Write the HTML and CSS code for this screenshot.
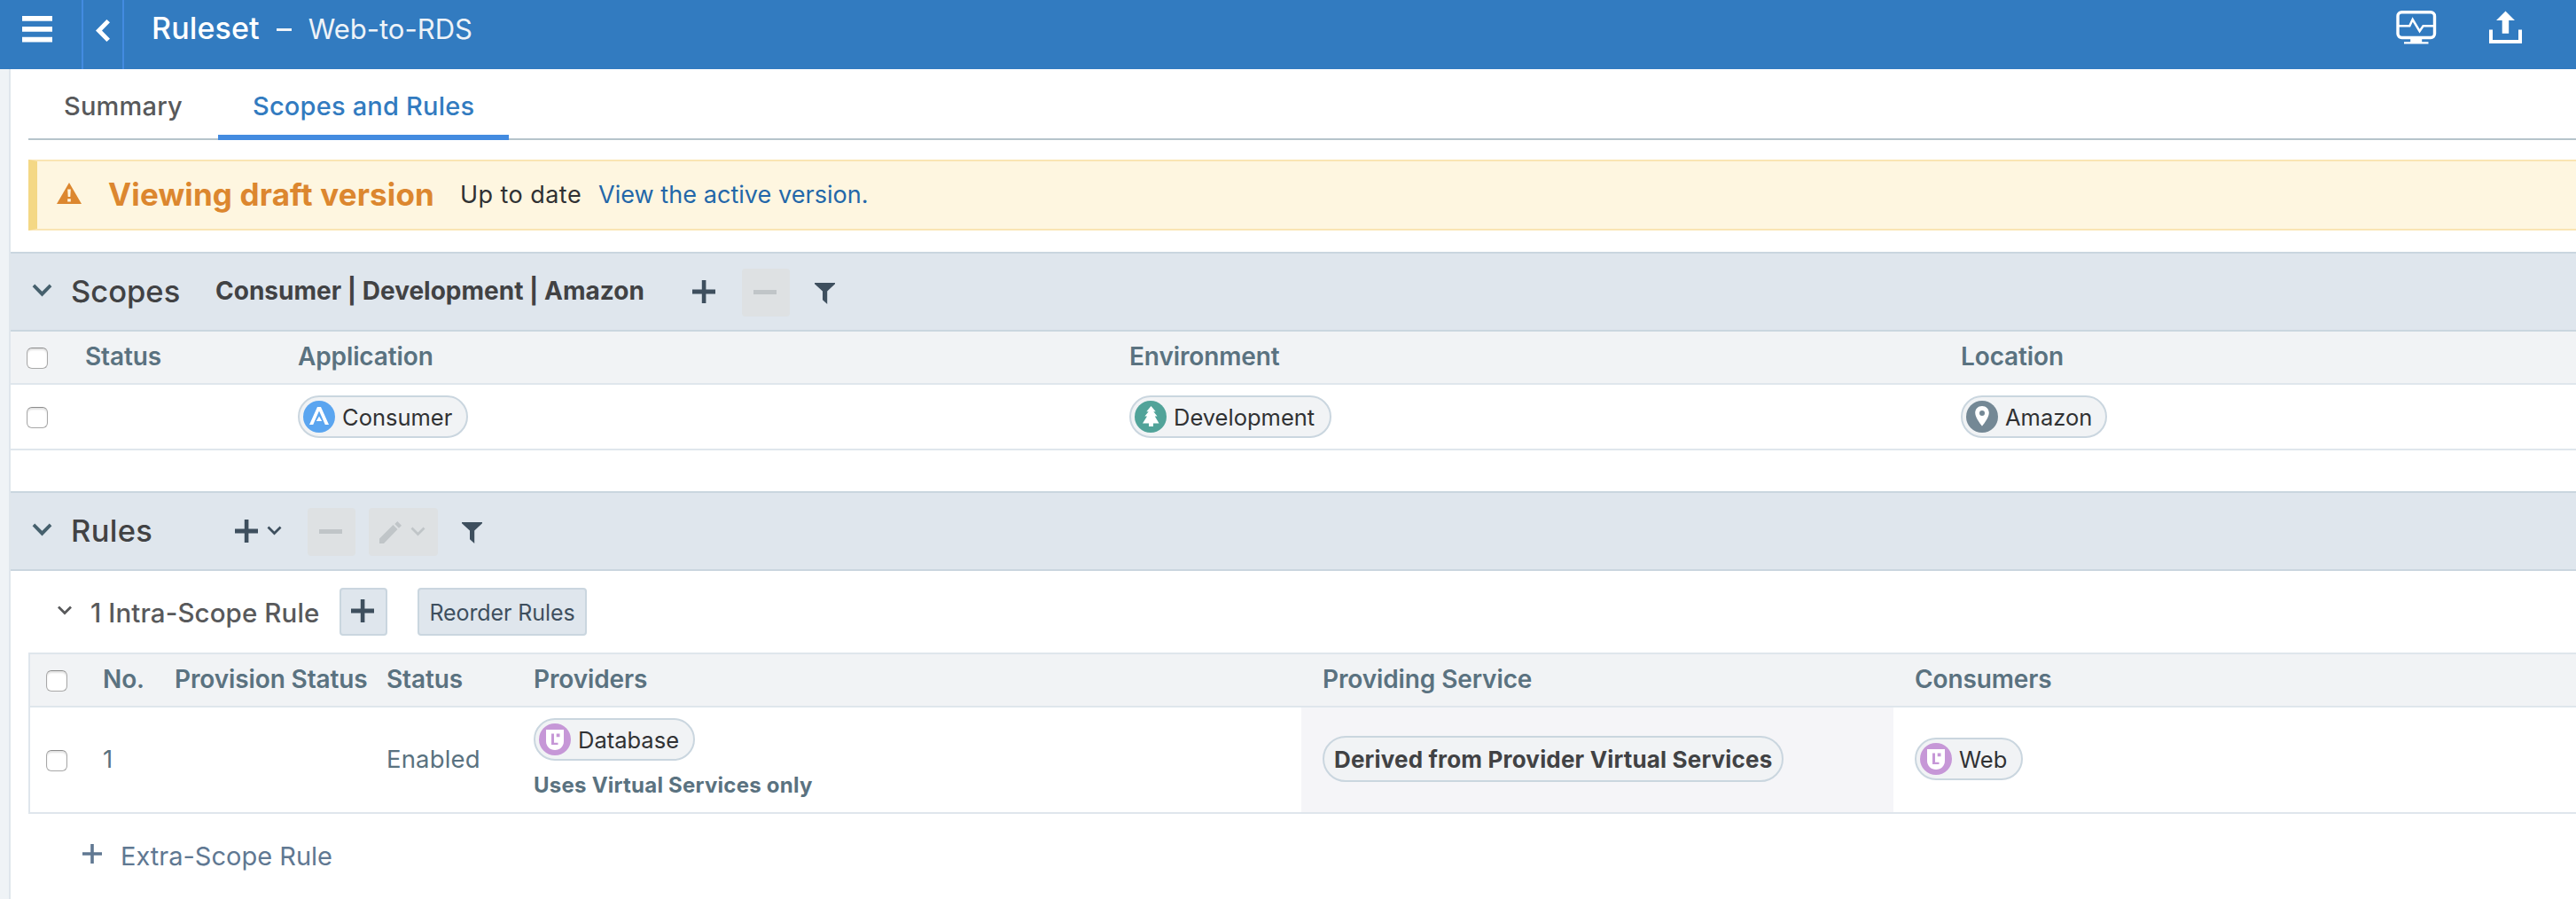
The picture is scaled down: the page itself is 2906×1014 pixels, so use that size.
FILE: index.html
```html
<!DOCTYPE html>
<html lang="en">
<head>
<meta charset="utf-8">
<title>Ruleset – Web-to-RDS</title>
<link rel="stylesheet" href="styles.css">
</head>
<body>
<svg class="defs" width="0" height="0" aria-hidden="true">
  <symbol id="plus" viewBox="0 0 26 26"><path d="M10.8 0h4.6v10.6H26v4.8H15.4V26h-4.6V15.4H0v-4.8h10.8z"/></symbol>
  <symbol id="minus" viewBox="0 0 26 5"><path d="M0 0h26v5H0z"/></symbol>
  <symbol id="filter" viewBox="0 0 23 24"><path d="M0 0h23v1.2L14.2 9.5V24L9 19.2V9.5L0 1.2z"/></symbol>
  <symbol id="chevron" viewBox="0 0 24 16"><path d="M3.2.6 12 9.4 20.8.6 23.600 3.500 12 15.400.4 3.500z"/></symbol>
  <symbol id="label" viewBox="0 0 36 36"><circle class="role-bg" cx="18" cy="18" r="18"/><path fill="#fff" d="M8 7h20v13c0 6-4.500 10-10 10S8 26 8 20z"/><path class="role-bg" d="M14 11.500h3v10.200h4.500V24H14zM19.700 11.500h3.800v3.800h-3.800z"/></symbol>
</svg>

<header class="topbar">
  <button class="menu"><svg width="34" height="30" viewBox="0 0 34 30"><path d="M0 0h34v5.800H0zM0 12h34v5.700H0zM0 23.800h34v5.800H0z"/></svg></button>
  <button class="back"><svg width="16" height="25" viewBox="0 0 16 25"><path d="M12.400 0 16 3.200 7 12.500l9 9.300-3.600 3.200L0 12.500z"/></svg></button>
  <h1 class="title">Ruleset<span class="dash"></span><span class="name">Web-to-RDS</span></h1>
  <div class="actions">
    <svg class="monitor" width="46" height="39" viewBox="0 0 46 39" fill="none" stroke="#fff"><rect x="2" y="1.700" width="41.500" height="28.800" rx="4.500" stroke-width="3.400"/><path d="M2 17.300h13.300L18.700 10l7.900 13.200 4-5.900H44" stroke-width="2.500"/><path d="M16.200 30h13v5.300h7.300v2.200H9v-2.200h7.200z" fill="#fff" stroke="none"/></svg>
    <svg width="37" height="38" viewBox="0 0 37 38" fill="#fff"><path d="M18.500.5 29 11h-6.800v14.800h-7.500V11H8zM0 21.500h4V33h29V21.500h4V37H0z"/></svg>
  </div>
</header>

<main class="page">
  <nav class="tabs"><a class="tab">Summary</a><a class="tab active">Scopes and Rules</a></nav>

  <div class="banner">
    <svg width="28" height="24" viewBox="0 0 28 24"><path fill="#dc872f" d="M14 0 28 24H0z"/><path fill="#fef6e0" d="M12.200 7.500h3.600L15.300 16h-2.600zM12.200 18.200h3.600v3.400h-3.600z"/></svg>
    <strong>Viewing draft version</strong><span class="state">Up to date</span><a>View the active version.</a>
  </div>

  <section>
    <div class="bar">
      <svg class="fold"><use href="#chevron"/></svg>
      <h2 class="scopes-title">Scopes</h2>
      <span class="scope-name">Consumer | Development | Amazon</span>
      <svg class="plus scopes-plus"><use href="#plus"/></svg>
      <span class="btn disabled scopes-minus"><svg class="minus"><use href="#minus"/></svg></span>
      <svg class="filter scopes-filter"><use href="#filter"/></svg>
    </div>
    <div class="scopes-grid head"><i class="check"></i><span>Status</span><span>Application</span><span>Environment</span><span>Location</span></div>
    <div class="scopes-grid row">
      <i class="check"></i><span></span>
      <div><span class="pill"><svg width="36" height="36" viewBox="0 0 36 36"><circle cx="18" cy="18" r="18" fill="#5aa5f0"/><path fill="#fff" d="M16 7h4l9 20h-4.200L18 11.500 11.200 27H7zM18 17.500l3.200 5.500h-6.400z"/></svg><span>Consumer</span></span></div>
      <div><span class="pill development"><svg width="36" height="36" viewBox="0 0 36 36"><circle cx="18" cy="18" r="18" fill="#51a399"/><path fill="#fff" d="m18.500 6 5.300 6.200h-2.500l4.200 5.300h-2.700l4.700 8h-6.500v3.500h-5v-3.500H9l5-8h-2.600l4.300-5.300h-2.400z"/></svg><span>Development</span></span></div>
      <div><span class="pill amazon"><svg width="36" height="36" viewBox="0 0 36 36"><circle cx="18" cy="18" r="18" fill="#748895"/><path fill="#fff" fill-rule="evenodd" d="M18 6c-4.500 0-7.800 3.400-7.800 7.700C10.200 19.500 18 28.500 18 28.500s7.800-9 7.800-14.800C25.800 9.400 22.500 6 18 6zm0 5a3 3 0 1 1 0 6 3 3 0 0 1 0-6z"/></svg><span>Amazon</span></span></div>
    </div>
  </section>

  <section class="rules">
    <div class="bar">
      <svg class="fold"><use href="#chevron"/></svg>
      <h2 class="rules-title">Rules</h2>
      <svg class="plus rules-plus"><use href="#plus"/></svg>
      <svg class="mini"><use href="#chevron"/></svg>
      <span class="btn disabled rules-minus"><svg class="minus"><use href="#minus"/></svg></span>
      <span class="btn disabled edit"><svg width="25" height="25" viewBox="0 0 25 25"><path d="M0 19.500 15.500 4 20.500 9 5 25H0zM17.300 3 20.300 0 25 4.700 22 7.700z"/></svg><svg class="mini"><use href="#chevron"/></svg></span>
      <svg class="filter rules-filter"><use href="#filter"/></svg>
    </div>

    <div class="subbar">
      <svg class="mini"><use href="#chevron"/></svg>
      <h3>1 Intra-Scope Rule</h3>
      <span class="btn outlined add"><svg class="plus"><use href="#plus"/></svg></span>
      <span class="btn outlined reorder">Reorder Rules</span>
    </div>

    <div class="rules-table">
      <div class="rules-grid head"><i class="check"></i><span>No.</span><span>Provision Status</span><span>Status</span><span>Providers</span><span class="service-head">Providing Service</span><span>Consumers</span></div>
      <div class="rules-grid row">
        <i class="check"></i><span class="value">1</span><span></span><span class="value">Enabled</span>
        <div class="providers"><span class="pill"><svg width="36" height="36"><use href="#label"/></svg><span>Database</span></span><p class="note">Uses Virtual Services only</p></div>
        <div class="service"><span class="pill derived">Derived from Provider Virtual Services</span></div>
        <div class="consumers"><span class="pill"><svg width="36" height="36"><use href="#label"/></svg><span>Web</span></span></div>
      </div>
    </div>

    <a class="extra"><svg width="22" height="22" viewBox="0 0 22 22"><path d="M9.200 0h3.600v9.200H22v3.600h-9.200V22H9.200v-9.200H0V9.200h9.200z"/></svg>Extra-Scope Rule</a>
  </section>
</main>
</body>
</html>
```
FILE: styles.css
```css
* { box-sizing: border-box; }
html, body { height: 100%; }
body {
  margin: 0;
  overflow: hidden;
  background: #fff;
  color: #303133;
  font-family: Inter, "Liberation Sans", sans-serif;
  font-size: 26px;
  line-height: 1.2;
  white-space: nowrap;
}
svg { display: block; flex: none; fill: currentColor; }
.defs { position: absolute; }
h1, h2, h3, p { margin: 0; font-weight: 500; }
button { border: 0; padding: 0; background: none; color: #fff; flex: none; }

/* top bar */
.topbar { display: flex; height: 78px; background: #327bc0; color: #fff; }
.menu { width: 94px; padding: 18px 0 0 25px; border-right: 2px solid #438be0; display: flex; align-items: flex-start; }
.back { width: 46px; padding: 22px 0 0 14px; border-right: 2px solid #438be0; display: flex; align-items: flex-start; }
.title { flex: 1; display: flex; align-items: baseline; font-size: 34px; line-height: 64px; letter-spacing: .12px; padding-left: 31px; }
.dash { width: 17px; height: 3px; margin: 0 19px 0 19px; background: #eef3f8; transform: translateY(-9px); }
.name { font-size: 31px; font-weight: 400; letter-spacing: 0; color: #eef3f8; }
.actions { display: flex; gap: 59px; padding: 12px 61px 0 0; }
.actions .monitor { fill: none; }

.page { height: 936px; margin-left: 10px; border-left: 2px solid #dfe6ec; box-shadow: -10px 0 #eff3f6; }

/* tabs */
.tabs { display: flex; height: 80px; margin-left: 20px; background: linear-gradient(#b6c4cb, #b6c4cb) bottom / 100% 2px no-repeat; }
.tab { padding: 0 40px; line-height: 83px; font-size: 29px; font-weight: 500; letter-spacing: .2px; color: #58595b; width: 214px; }
.tab.active { width: 328px; padding-left: 39px; color: #327bc0; border-bottom: 6px solid #438be0; }

/* draft banner */
.banner { display: flex; align-items: center; height: 80px; margin: 22px 0 24px 20px; padding: 0 0 0 22px; background: #fef6e0; border: 2px solid #fae5b3; border-left: 10px solid #f4d885; border-right: 0; }
.banner svg { margin-top: -4px; }
.banner strong { width: 397px; margin: -2px 0 0 30px; font-size: 35px; font-weight: 700; letter-spacing: .14px; color: #dc872f; }
.state { width: 156px; font-size: 27px; letter-spacing: .45px; margin-top: 1px; }
.banner a { font-size: 27px; letter-spacing: .05px; color: #2367a9; margin-top: 1px; }

/* section bars */
.bar { display: flex; align-items: center; height: 90px; padding-left: 24px; background: #dfe6ed; border: solid #cad6df; border-width: 2px 0; color: #3e4f5e; }
.fold { width: 23px; height: 15px; margin-top: -4px; color: #46606d; }
.bar h2 { font-size: 34.500px; color: #414244; }
.scopes-title { width: 163px; margin-left: 21px; }
.scope-name { width: 538px; font-size: 28px; font-weight: 700; letter-spacing: 0; color: #414244; }
.plus { width: 26px; height: 26px; }
.minus { width: 26px; height: 5px; margin: -2px 3px 0 0; }
.filter { width: 23px; height: 24px; }
.mini { width: 17px; height: 11px; }
.btn { display: flex; align-items: center; justify-content: center; flex: none; height: 54px; border-radius: 4px; }
.disabled { background: #dee1e3; color: #c0c5c8; margin-top: 2px; }
.scopes-minus, .rules-minus { width: 54px; }
.scopes-minus { margin-left: 30px; }
.scopes-filter { margin-left: 28px; margin-top: 3px; }
.rules-title { width: 185px; margin-left: 21px; letter-spacing: .3px; }
.bar .mini { margin: -2px 0 0 10px; }
.rules-minus { margin-left: 29px; }
.edit { width: 78px; margin-left: 15px; padding-right: 3px; }
.rules-filter { margin-left: 27px; margin-top: 3px; }

/* tables */
.head { height: 60px; background: #f1f3f5; border-bottom: 2px solid #dfe6ec; font-size: 28px; font-weight: 600; letter-spacing: -.12px; color: #5a7280; }
.scopes-grid, .rules-grid { display: grid; align-items: center; }
.scopes-grid { grid-template-columns: 84px 240px 938px 938px 1fr; }
.scopes-grid.row { height: 74px; border-bottom: 2px solid #dfe6ec; }
.scopes-grid .check { margin-left: 18px; }
.check { width: 24px; height: 24px; margin-top: 2px; border: 1px solid #a8a8a8; border-top-color: #8c8c8c; border-radius: 6px; background: #fff; box-shadow: inset 0 2px 2px #e2e2e2; }
.pill { display: inline-flex; align-items: center; height: 48px; padding: 0 16px 0 4px; border: 2px solid #cad6df; border-radius: 24px; background: #f1f3f5; font-size: 25.500px; vertical-align: top; }
.pill svg { margin-right: 8px; }
.pill span { margin-top: 2px; }
.pill.development { padding-right: 17px; }
.pill.amazon { padding-right: 15px; }
.role-bg { fill: #c697d7; }

.rules { margin-top: 46px; }
.subbar { display: flex; align-items: center; height: 92px; padding-left: 52px; color: #58595b; }
.subbar > .mini { width: 18px; margin-top: -4px; }
.subbar h3 { width: 281px; margin: 3px 0 0 20px; font-size: 29.500px; letter-spacing: .1px; }
.outlined { background: #dfe6ed; border: 2px solid #cad6df; color: #3e4f5e; }
.add { width: 54px; }
.add .plus { margin-top: -3px; margin-right: 2px; }
.reorder { width: 191px; margin-left: 34px; font-size: 25px; letter-spacing: -.09px; padding-top: 1px; }
.rules-table { margin-left: 20px; border: 2px solid #dfe6ec; border-right: 0; }
.rules-grid { grid-template-columns: 81px 81px 239px 167px 866px 668px 1fr; }
.rules-grid .check { margin-left: 18px; }
.rules-grid.row { height: 118px; }
.rules-grid.head > :nth-child(-n+4):not(.check) { padding-left: 1px; }
.service-head { padding-left: 24px; }
.service-head + span { padding-left: 24px; }
.value { font-size: 27.500px; letter-spacing: .15px; color: #5a7280; margin-top: -1px; padding-left: 1px; }
.providers { align-self: start; padding-top: 12px; }
.note { margin-top: 14px; font-size: 24px; font-weight: 700; letter-spacing: .24px; color: #5a7280; }
.service { align-self: stretch; display: flex; align-items: center; padding-left: 24px; background: #f5f5f8; }
.derived { height: 52px; padding: 1px 11px 0; border-radius: 26px; font-size: 26px; font-weight: 700; letter-spacing: .17px; color: #414244; margin-top: -2px; }
.consumers { padding-left: 24px; margin-top: -2px; }
.extra { display: flex; align-items: center; gap: 21px; height: 40px; margin: 28px 0 0 81px; font-size: 29px; letter-spacing: 0; color: #607892; }
.extra svg { margin-top: -6px; }
```
